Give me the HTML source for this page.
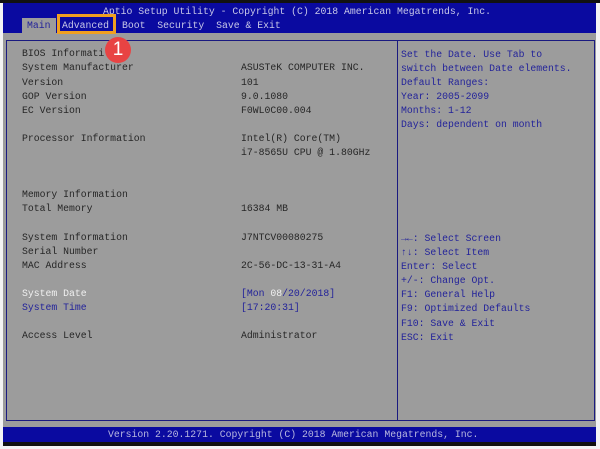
<!DOCTYPE html>
<html><head><meta charset="utf-8"><style>
*{margin:0;padding:0}
body{width:600px;height:449px;background:#f4f4f4;position:relative;overflow:hidden;font-family:"Liberation Mono","DejaVu Sans Mono",monospace;font-size:9.8px;color:#262626}
.a{position:absolute;white-space:pre;line-height:12px}
.b{color:#23239a}
.w{color:#f0f0f0}
</style></head><body>
<div class="a" style="left:0;top:0;width:600px;height:3px;background:#111"></div>
<div class="a" style="left:3px;top:3px;width:593px;height:30px;background:#0a0aa0"></div>
<div class="a" style="left:3px;top:33px;width:593px;height:394px;background:#9c9c9c"></div>
<div class="a" style="left:22px;top:18px;width:34px;height:15px;background:#9c9c9c"></div>
<div class="a" style="left:6px;top:40px;width:587px;height:379px;border:1px solid #1a1a80"></div>
<div class="a" style="left:397px;top:40px;width:1px;height:380px;background:#1a1a80"></div>
<div class="a" style="left:3px;top:427px;width:593px;height:15px;background:#0a0aa0"></div>
<div class="a" style="left:3px;top:442px;width:593px;height:4px;background:#111"></div>

<div class="a" style="left:103px;top:6px;color:#c8c8e8">Aptio Setup Utility - Copyright (C) 2018 American Megatrends, Inc.</div>
<div class="a b" style="left:27px;top:20px">Main</div>
<div class="a" style="left:62px;top:20px;color:#c8c8e8">Advanced</div>
<div class="a" style="left:122px;top:20px;color:#c8c8e8">Boot  Security  Save &amp; Exit</div>
<div class="a" style="left:57px;top:14px;width:53px;height:14px;border:3px solid #f0a020"></div>
<div class="a" style="left:105px;top:37px;width:26px;height:26px;border-radius:50%;background:#e84343;color:#fff;font-family:'Liberation Sans',sans-serif;font-size:19px;line-height:26px;text-align:center">1</div>

<div class="a" style="left:22px;top:48px">BIOS Informati</div>
<div class="a" style="left:22px;top:62px">System Manufacturer</div>
<div class="a" style="left:22px;top:77px">Version</div>
<div class="a" style="left:22px;top:91px">GOP Version</div>
<div class="a" style="left:22px;top:105px">EC Version</div>
<div class="a" style="left:22px;top:133px">Processor Information</div>
<div class="a" style="left:22px;top:189px">Memory Information</div>
<div class="a" style="left:22px;top:203px">Total Memory</div>
<div class="a" style="left:22px;top:232px">System Information</div>
<div class="a" style="left:22px;top:246px">Serial Number</div>
<div class="a" style="left:22px;top:260px">MAC Address</div>
<div class="a w" style="left:22px;top:288px">System Date</div>
<div class="a b" style="left:22px;top:302px">System Time</div>
<div class="a" style="left:22px;top:330px">Access Level</div>

<div class="a" style="left:241px;top:62px">ASUSTeK COMPUTER INC.</div>
<div class="a" style="left:241px;top:77px">101</div>
<div class="a" style="left:241px;top:91px">9.0.1080</div>
<div class="a" style="left:241px;top:105px">F0WL0C00.004</div>
<div class="a" style="left:241px;top:133px">Intel(R) Core(TM)</div>
<div class="a" style="left:241px;top:147px">i7-8565U CPU @ 1.80GHz</div>
<div class="a" style="left:241px;top:203px">16384 MB</div>
<div class="a" style="left:241px;top:232px">J7NTCV00080275</div>
<div class="a" style="left:241px;top:260px">2C-56-DC-13-31-A4</div>
<div class="a b" style="left:241px;top:288px">[Mon <span class="w">08</span>/20/2018]</div>
<div class="a b" style="left:241px;top:302px">[17:20:31]</div>
<div class="a" style="left:241px;top:330px">Administrator</div>

<div class="a b" style="left:401px;top:48px;line-height:14.1px">Set the Date. Use Tab to
switch between Date elements.
Default Ranges:
Year: 2005-2099
Months: 1-12
Days: dependent on month</div>
<div class="a b" style="left:401px;top:232px;line-height:14.1px">→←: Select Screen
↑↓: Select Item
Enter: Select
+/-: Change Opt.
F1: General Help
F9: Optimized Defaults
F10: Save &amp; Exit
ESC: Exit</div>

<div class="a" style="left:108px;top:429px;color:#b8b8e0">Version 2.20.1271. Copyright (C) 2018 American Megatrends, Inc.</div>
</body></html>
